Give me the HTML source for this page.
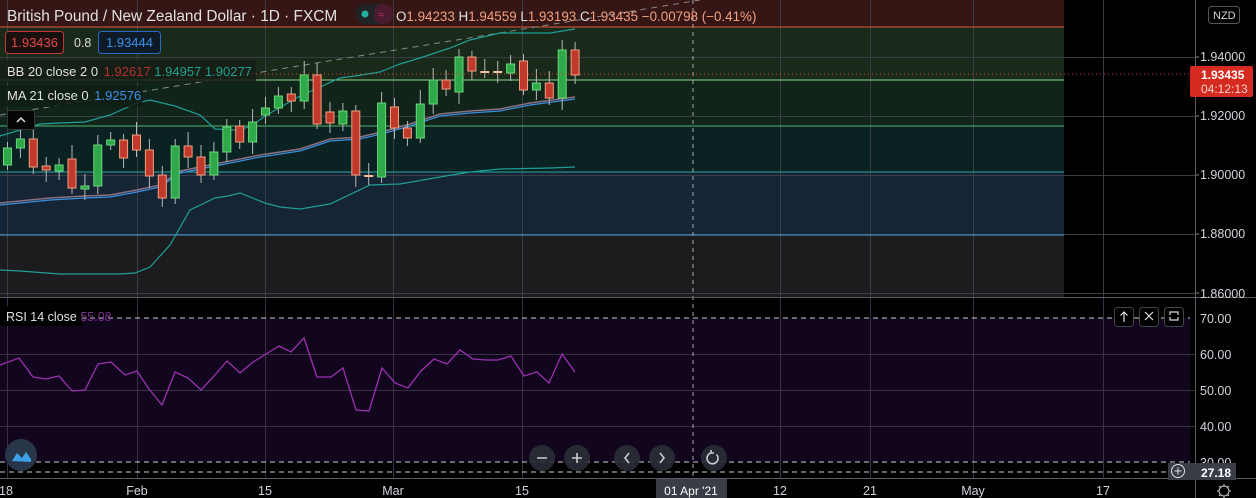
<!DOCTYPE html>
<html><head><meta charset="utf-8"><style>
html,body{margin:0;padding:0;background:#000;width:1256px;height:498px;overflow:hidden;font-family:"Liberation Sans",sans-serif}
svg{display:block}
</style></head><body>
<svg id="s" width="1256" height="498" xmlns="http://www.w3.org/2000/svg" font-family="Liberation Sans, sans-serif">
<rect width="1256" height="498" fill="#000"/>
<rect x="0" y="0" width="1064" height="27" fill="#361614"/>
<rect x="0" y="27" width="1064" height="53" fill="#1a2a1a"/>
<rect x="0" y="80" width="1064" height="46" fill="#10241a"/>
<rect x="0" y="126" width="1064" height="46" fill="#0a2222"/>
<rect x="0" y="172" width="1064" height="63" fill="#162536"/>
<rect x="0" y="235" width="1064" height="62" fill="#1c1c1e"/>
<g id="grid" stroke="#3a3d44" stroke-width="1"></g>
<line x1="0" y1="27" x2="1064" y2="27" stroke="#e05a40"/>
<line x1="0" y1="80" x2="1064" y2="80" stroke="#8fd48f"/>
<line x1="0" y1="126" x2="1064" y2="126" stroke="#4cb86a"/>
<line x1="0" y1="172" x2="1064" y2="172" stroke="#2aa5a0"/>
<line x1="0" y1="235" x2="1064" y2="235" stroke="#4a9ee0"/>
<rect x="0" y="318" width="1190" height="144" fill="#12061e"/>
<g id="g2" stroke="#3a3046" stroke-width="1"></g>
<line x1="0" y1="318" x2="1190" y2="318" stroke="#ccc" stroke-dasharray="5,4"/>
<line x1="0" y1="462" x2="1190" y2="462" stroke="#ccc" stroke-dasharray="5,4"/>
<line x1="0" y1="472" x2="1170" y2="472" stroke="#ccc" stroke-dasharray="5,4"/>
<line x1="693" y1="0" x2="693" y2="478" stroke="#aaa" stroke-dasharray="4,4"/>
<line x1="0" y1="115" x2="700" y2="0" stroke="#888" stroke-dasharray="6,5"/>
<polyline fill="none" stroke="#1f9e96" stroke-width="1.2" points="0,136 40,124 60,123 85,122 110,115 137,103 150,100 175,106 200,115 215,129 235,130 250,127 265,116 300,96 340,78 355,76 380,72 400,64 420,58 450,48 470,40 500,33 550,33 575,29"/>
<polyline fill="none" stroke="#1f9e96" stroke-width="1.2" points="0,270 20,271 60,274 120,274 135,273 150,267 170,245 190,210 215,198 228,196 240,193 265,203 280,207 300,209 330,204 370,185 400,184 440,177 470,172 500,169 550,168 575,167"/>
<polyline fill="none" stroke="#8a7080" stroke-width="1.5" points="0,203 50,198 85,196 110,195 137,190 160,185 180,171 200,167 230,161 260,155 300,149 330,139 360,137 385,131 410,124 440,114 470,111 500,109 530,103 560,99 575,97"/>
<polyline fill="none" stroke="#3a8ee0" stroke-width="1.2" points="0,205 50,200 85,198 110,197 137,192 160,187 180,173 200,169 230,163 260,157 300,151 330,141 360,139 385,133 410,126 440,116 470,113 500,111 530,105 560,101 575,99"/>
<g id="candles"></g>
<line x1="0" y1="74" x2="1195" y2="74" stroke="#e04030" stroke-dasharray="1,3"/>
<polyline id="rsi" fill="none" stroke="#9b30b0" stroke-width="1.3"/>
<line x1="0" y1="297.5" x2="1256" y2="297.5" stroke="#5a5d66"/>
<line x1="0" y1="478.5" x2="1256" y2="478.5" stroke="#5a5d66"/>
<line x1="1195.5" y1="0" x2="1195.5" y2="498" stroke="#5a5d66"/>
<g fill="#d1d4dc" font-size="12.5">
<text x="1200" y="61">1.94000</text><text x="1200" y="120">1.92000</text><text x="1200" y="179">1.90000</text><text x="1200" y="238">1.88000</text><text x="1200" y="298">1.86000</text>
<text x="1200" y="323">70.00</text><text x="1200" y="359">60.00</text><text x="1200" y="395">50.00</text><text x="1200" y="431">40.00</text><text x="1200" y="467">30.00</text>
</g>
<g stroke="#888"><line x1="1196" y1="57" x2="1199" y2="57"/><line x1="1196" y1="116" x2="1199" y2="116"/><line x1="1196" y1="175" x2="1199" y2="175"/><line x1="1196" y1="234" x2="1199" y2="234"/><line x1="1196" y1="293" x2="1199" y2="293"/></g>
<rect x="1208.5" y="6.5" width="31" height="17" rx="3" fill="none" stroke="#555"/>
<text x="1213" y="19" fill="#d1d4dc" font-size="11">NZD</text>
<rect x="1190" y="66" width="63" height="31" rx="2" fill="#d42a20"/>
<text x="1201" y="79" fill="#fff" font-size="12" font-weight="bold">1.93435</text>
<text x="1201" y="93" fill="#f5d0cc" font-size="12">04:12:13</text>
<rect x="1168" y="463" width="68" height="17" fill="#3a3d46"/>
<text x="1201" y="477" fill="#fff" font-size="12" font-weight="bold">27.18</text>
<circle cx="1178" cy="471" r="6.5" fill="none" stroke="#ddd"/><path d="M1174.5 471h7M1178 467.5v7" stroke="#ddd"/>
<g fill="#000" stroke="#444"><rect x="1114.5" y="307.5" width="19" height="19" rx="3"/><rect x="1139.5" y="307.5" width="19" height="19" rx="3"/><rect x="1164.5" y="307.5" width="19" height="19" rx="3"/></g>
<g stroke="#ddd" fill="none" stroke-width="1.2"><path d="M1124 322v-10M1120.5 315.5l3.5-3.5 3.5 3.5"/><path d="M1145 312l8 8M1153 312l-8 8"/><path d="M1170 315v-3h8v3M1170 317v3h8v-3"/></g>
<g fill="#d1d4dc" font-size="12.5" text-anchor="middle">
<text x="6" y="495">18</text><text x="137" y="495">Feb</text><text x="265" y="495">15</text><text x="393" y="495">Mar</text><text x="522" y="495">15</text>
<text x="780" y="495">12</text><text x="870" y="495">21</text><text x="973" y="495">May</text><text x="1103" y="495">17</text>
</g>
<rect x="656" y="479" width="71" height="19" fill="#3a3d46"/>
<text x="691" y="495" fill="#fff" font-size="12" text-anchor="middle">01 Apr '21</text>
<circle cx="1224" cy="491" r="5" fill="none" stroke="#ccc"/>
<g stroke="#ccc"><path d="M1224 484v2M1224 496v2M1217 491h2M1229 491h2M1219 486l1.5 1.5M1227.5 494.5l1.5 1.5M1229 486l-1.5 1.5M1220.5 494.5l-1.5 1.5"/></g>
<g fill="#2a2d36" opacity="0.9"><circle cx="542" cy="458" r="13"/><circle cx="577" cy="458" r="13"/><circle cx="627" cy="458" r="13"/><circle cx="662" cy="458" r="13"/><circle cx="714" cy="458" r="13"/></g>
<g stroke="#ccc" stroke-width="1.6" fill="none"><path d="M537 458h10M572 458h10M577 453v10M629 453l-4 5 4 5M660 453l4 5-4 5"/><path d="M711 453a5.5 5.5 0 1 0 5.5 1.5M711 450v3h3"/></g>
<circle cx="21" cy="455" r="16" fill="#28364a"/>
<path d="M12 461l5-8 5 5 4-6 5 7 0 3z" fill="#3ba0e8"/>
<text x="7" y="21" fill="#e0e0e0" font-size="15.4">British Pound / New Zealand Dollar · 1D · FXCM</text>
<rect x="355" y="4" width="38" height="20" rx="10" fill="#222326"/>
<rect x="374" y="4" width="19" height="20" rx="9" fill="#4a1a2e"/>
<circle cx="365" cy="14" r="3.5" fill="#22b0a0"/>
<text x="378" y="18" fill="#c03060" font-size="11">≈</text>
<text x="396" y="21" font-size="13.4" fill="#e0e0e0">O<tspan fill="#f0a080">1.94233</tspan> H<tspan fill="#f0a080">1.94559</tspan> L<tspan fill="#f0a080">1.93193</tspan> C<tspan fill="#f0a080">1.93435</tspan> <tspan fill="#f0a080">−0.00798 (−0.41%)</tspan></text>
<rect x="5.5" y="31.5" width="58" height="22" rx="3" fill="#1a1010" stroke="#c03838"/>
<text x="11" y="47" fill="#e04848" font-size="13">1.93436</text>
<text x="74" y="47" fill="#ddd" font-size="12.5">0.8</text>
<rect x="98.5" y="31.5" width="62" height="22" rx="3" fill="#0e1a28" stroke="#2a6ac0"/>
<text x="106" y="47" fill="#3a90e8" font-size="13">1.93444</text>
<rect x="0" y="60" width="256" height="22" fill="#151d15" opacity="0.85"/>
<text x="7" y="76" fill="#e0e0e0" font-size="13">BB 20 close 2 0 <tspan fill="#b03030" dx="2">1.92617</tspan> <tspan fill="#1fa090">1.94957</tspan> <tspan fill="#1fa090">1.90277</tspan></text>
<rect x="0" y="86" width="143" height="21" fill="#101e15" opacity="0.85"/>
<text x="7" y="100" fill="#e0e0e0" font-size="13">MA 21 close 0 <tspan fill="#3a90e8" dx="2">1.92576</tspan></text>
<rect x="7.5" y="110.5" width="27" height="19" rx="2" fill="#050505" stroke="#333"/>
<path d="M17 122l4-4 4 4" stroke="#ddd" stroke-width="1.5" fill="none"/>
<rect x="0" y="306" width="82" height="20" fill="#000"/>
<text x="6" y="321" fill="#e0e0e0" font-size="12.5">RSI 14 close <tspan fill="#7a3090">55.08</tspan></text>
</svg>
<script>
var NS="http://www.w3.org/2000/svg";
function el(p,t,a){var e=document.createElementNS(NS,t);for(var k in a)e.setAttribute(k,a[k]);p.appendChild(e);return e;}
var g=document.getElementById('grid');
[57,116,175,234,293].forEach(function(y){el(g,'line',{x1:0,y1:y+.5,x2:1195,y2:y+.5});});
var xs=[7,137,265,393,522,780,870,973,1103];
xs.forEach(function(x){el(g,'line',{x1:x+.5,y1:0,x2:x+.5,y2:297});});
var g2=document.getElementById('g2');
[354,390,426].forEach(function(y){el(g2,'line',{x1:0,y1:y+.5,x2:1195,y2:y+.5});});
xs.forEach(function(x){el(g2,'line',{x1:x+.5,y1:298,x2:x+.5,y2:478});});
var C=[["G",148,165],["G",139,148],["R",139,167],["R",166,170],["G",165,171],["R",159,188],["G",186,189],["G",145,186],["G",140,145],["R",140,158],["R",135,150],["R",150,176],["R",175,198],["G",146,198],["R",146,157],["R",157,175],["G",152,175],["G",127,152],["R",126,142],["G",122,142],["G",108,115],["G",96,108],["R",94,101],["G",75,101],["R",75,124],["R",112,123],["G",111,124],["R",111,175],["D",176,176],["G",103,177],["R",107,128],["R",128,138],["G",104,138],["G",80,104],["R",80,89],["G",57,92],["R",57,71],["D",72,72],["D",72,72],["G",64,73],["R",61,90],["G",83,90],["R",83,98],["G",50,98],["R",50,75]];
var cg=document.getElementById('candles');
C.forEach(function(c,i){var x=7.5+i*12.9;var t=c[1],b=c[2];
var hi=t-6-(i*7%9),lo=b+5+(i*5%8);
el(cg,'line',{x1:x,y1:hi,x2:x,y2:lo,stroke:'#b8b8b8','stroke-width':1});
var fill=c[0]=='G'?'#2fa84a':'#c0392b',st=c[0]=='G'?'#6ad67a':'#f0a080';
if(c[0]=='D'){el(cg,'rect',{x:x-4.5,y:t-1,width:9,height:2,fill:'#f0c0a0'});}
else el(cg,'rect',{x:x-4,y:t,width:8,height:Math.max(b-t,2),fill:fill,stroke:st,'stroke-width':1});
});
document.getElementById('rsi').setAttribute('points',"0,365 19,358 33,377 46,379 59,376 72,391 85,390 98,364 111,362 125,375 137,371 149,389 162,405 175,372 188,378 201,390 214,376 227,361 240,373 253,362 266,354 279,346 291,352 304,338 317,377 331,377 343,368 356,410 369,411 382,368 395,383 408,388 421,371 434,359 447,364 460,350 473,359 486,360 498,360 511,356 524,376 537,372 549,383 562,354 575,372");
</script>
</body></html>
